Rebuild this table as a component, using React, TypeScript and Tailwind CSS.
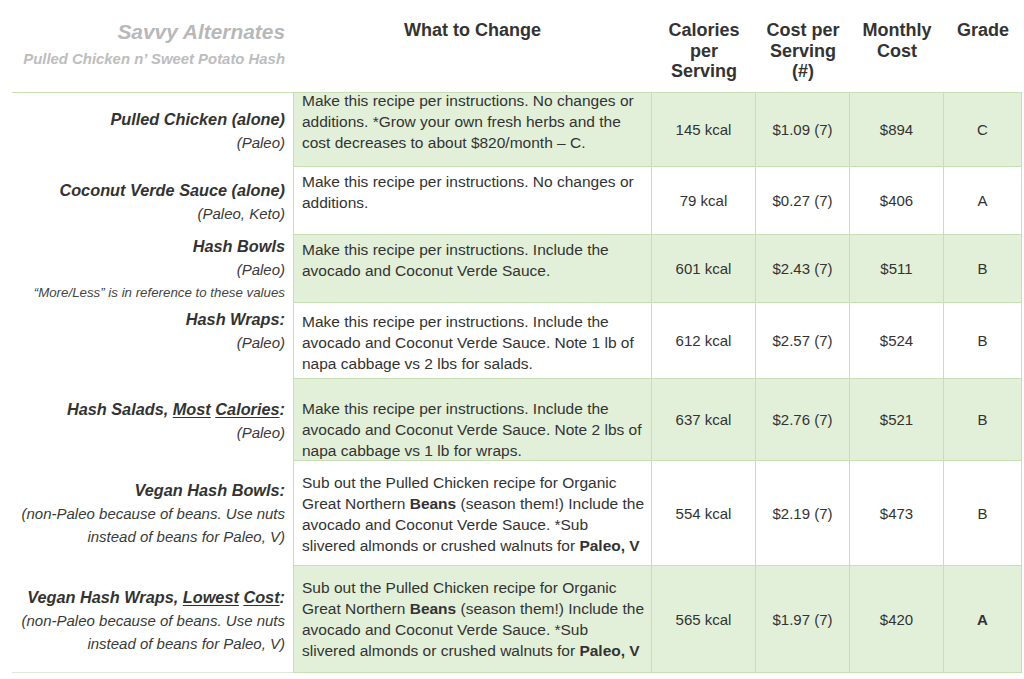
import React from "react";

type Row = {
  green: boolean;
  h: string;
  labelPad: string;
  descPad: string;
  label: React.ReactNode[];
  desc: React.ReactNode[];
  cal: string;
  cost: string;
  monthly: string;
  grade: string;
  gradeBold?: boolean;
};

const T = ({ children }: { children: React.ReactNode }) => (
  <div className="font-bold text-[16.3px] leading-[23px] text-[#333]">{children}</div>
);
const S = ({ children }: { children: React.ReactNode }) => (
  <div className="text-[15px] leading-[23px] text-[#3a3a3a]">{children}</div>
);
const U = ({ children }: { children: React.ReactNode }) => (
  <span className="underline underline-offset-2">{children}</span>
);

const subDesc = [
  "Sub out the Pulled Chicken recipe for Organic",
  <>
    Great Northern <b>Beans</b> (season them!) Include the
  </>,
  "avocado and Coconut Verde Sauce. *Sub",
  <>
    slivered almonds or crushed walnuts for <b>Paleo, V</b>
  </>,
];

const rows: Row[] = [
  {
    green: true,
    h: "h-[74px]",
    labelPad: "pt-[1px]",
    descPad: "-mt-[3px]",
    label: [<T>Pulled Chicken (alone)</T>, <S>(Paleo)</S>],
    desc: [
      "Make this recipe per instructions. No changes or",
      "additions. *Grow your own fresh herbs and the",
      "cost decreases to about $820/month – C.",
    ],
    cal: "145 kcal",
    cost: "$1.09 (7)",
    monthly: "$894",
    grade: "C",
  },
  {
    green: false,
    h: "h-[68px]",
    labelPad: "pt-[1px]",
    descPad: "pt-[4px]",
    label: [<T>Coconut Verde Sauce (alone)</T>, <S>(Paleo, Keto)</S>],
    desc: ["Make this recipe per instructions. No changes or", "additions."],
    cal: "79 kcal",
    cost: "$0.27 (7)",
    monthly: "$406",
    grade: "A",
  },
  {
    green: true,
    h: "h-[68px]",
    labelPad: "",
    descPad: "pt-[4px]",
    label: [
      <T>Hash Bowls</T>,
      <S>(Paleo)</S>,
      <div className="text-[13.3px] leading-[23px] text-[#444]">
        “More/Less” is in reference to these values
      </div>,
    ],
    desc: ["Make this recipe per instructions. Include the", "avocado and Coconut Verde Sauce."],
    cal: "601 kcal",
    cost: "$2.43 (7)",
    monthly: "$511",
    grade: "B",
  },
  {
    green: false,
    h: "h-[76px]",
    labelPad: "pb-[21px]",
    descPad: "pt-[8px]",
    label: [<T>Hash Wraps:</T>, <S>(Paleo)</S>],
    desc: [
      "Make this recipe per instructions. Include the",
      "avocado and Coconut Verde Sauce. Note 1 lb of",
      "napa cabbage vs 2 lbs for salads.",
    ],
    cal: "612 kcal",
    cost: "$2.57 (7)",
    monthly: "$524",
    grade: "B",
  },
  {
    green: true,
    h: "h-[82px]",
    labelPad: "pt-[1px]",
    descPad: "pt-[19px]",
    label: [
      <T>
        Hash Salads, <U>Most</U> <U>Calories</U>:
      </T>,
      <S>(Paleo)</S>,
    ],
    desc: [
      "Make this recipe per instructions. Include the",
      "avocado and Coconut Verde Sauce. Note 2 lbs of",
      "napa cabbage vs 1 lb for wraps.",
    ],
    cal: "637 kcal",
    cost: "$2.76 (7)",
    monthly: "$521",
    grade: "B",
  },
  {
    green: false,
    h: "h-[105px]",
    labelPad: "",
    descPad: "pt-[11px]",
    label: [
      <T>Vegan Hash Bowls:</T>,
      <S>(non-Paleo because of beans. Use nuts</S>,
      <S>instead of beans for Paleo, V)</S>,
    ],
    desc: subDesc,
    cal: "554 kcal",
    cost: "$2.19 (7)",
    monthly: "$473",
    grade: "B",
  },
  {
    green: true,
    h: "h-[107px]",
    labelPad: "pt-[3px]",
    descPad: "pt-[11px]",
    label: [
      <T>
        Vegan Hash Wraps, <U>Lowest</U> <U>Cost</U>:
      </T>,
      <S>(non-Paleo because of beans. Use nuts</S>,
      <S>instead of beans for Paleo, V)</S>,
    ],
    desc: subDesc,
    cal: "565 kcal",
    cost: "$1.97 (7)",
    monthly: "$420",
    grade: "A",
    gradeBold: true,
  },
];

export default function App() {
  return (
    <div className="w-[1024px] h-[679px] bg-white overflow-hidden font-['Liberation_Sans',Arial,sans-serif] text-[#333]">
      <div className="ml-[12px] w-[1010px]">
        {/* Header */}
        <div className="grid grid-cols-[281px_359px_104px_94px_94px_78px] h-[92px]">
          <div className="flex flex-col items-end pr-[8px] pt-[18px] italic font-bold text-right">
            <div className="text-[20.9px] leading-[27px] text-[#b8b8b8]">Savvy Alternates</div>
            <div className="mt-[4px] text-[14.9px] leading-[20px] text-[#bdbdbd]">
              Pulled Chicken n’ Sweet Potato Hash
            </div>
          </div>
          <div className="pt-[20px] text-center font-bold text-[18px] leading-[20.5px] text-[#333]">
            What to Change
          </div>
          <div className="pt-[20px] text-center font-bold text-[18px] leading-[20.5px] text-[#333]">
            Calories
            <br />
            per
            <br />
            Serving
          </div>
          <div className="pt-[20px] text-center font-bold text-[18px] leading-[20.5px] text-[#333]">
            Cost per
            <br />
            Serving
            <br />
            (#)
          </div>
          <div className="pt-[20px] text-center font-bold text-[18px] leading-[20.5px] text-[#333]">
            Monthly
            <br />
            Cost
          </div>
          <div className="pt-[20px] text-center font-bold text-[18px] leading-[20.5px] text-[#333]">
            Grade
          </div>
        </div>

        {/* Body */}
        <div className="border-t border-[#c6e0b4]">
          {rows.map((r, i) => {
            const bg = r.green ? "bg-[#e2f0d9]" : "bg-white";
            const last = i === rows.length - 1;
            return (
              <div
                key={i}
                className={`grid grid-cols-[281px_359px_104px_94px_94px_78px] grid-rows-[100%] ${r.h}`}
              >
                <div
                  className={`min-h-0 flex flex-col justify-center items-end text-right italic pr-[8px] ${r.labelPad} ${
                    last ? "border-b border-[#dfe9d8]" : ""
                  }`}
                >
                  {r.label.map((l, j) => (
                    <React.Fragment key={j}>{l}</React.Fragment>
                  ))}
                </div>
                <div
                  className={`min-h-0 pl-[8px] border-l border-r border-b border-[#c6e0b4] text-[15.5px] leading-[21px] text-[#333] whitespace-nowrap ${bg}`}
                >
                  <div className={r.descPad}>
                    {r.desc.map((d, j) => (
                      <div key={j}>{d}</div>
                    ))}
                  </div>
                </div>
                <div
                  className={`min-h-0 flex items-center justify-center pt-[2px] border-r border-b border-[#c6e0b4] text-[15px] text-[#333] ${bg}`}
                >
                  {r.cal}
                </div>
                <div
                  className={`min-h-0 flex items-center justify-center pt-[2px] border-r border-b border-[#c6e0b4] text-[15px] text-[#333] ${bg}`}
                >
                  {r.cost}
                </div>
                <div
                  className={`min-h-0 flex items-center justify-center pt-[2px] border-r border-b border-[#c6e0b4] text-[15px] text-[#333] ${bg}`}
                >
                  {r.monthly}
                </div>
                <div
                  className={`min-h-0 flex items-center justify-center pt-[2px] border-r border-b border-[#c6e0b4] text-[15px] text-[#333] ${bg} ${
                    r.gradeBold ? "font-bold" : ""
                  }`}
                >
                  {r.grade}
                </div>
              </div>
            );
          })}
        </div>
      </div>
    </div>
  );
}
